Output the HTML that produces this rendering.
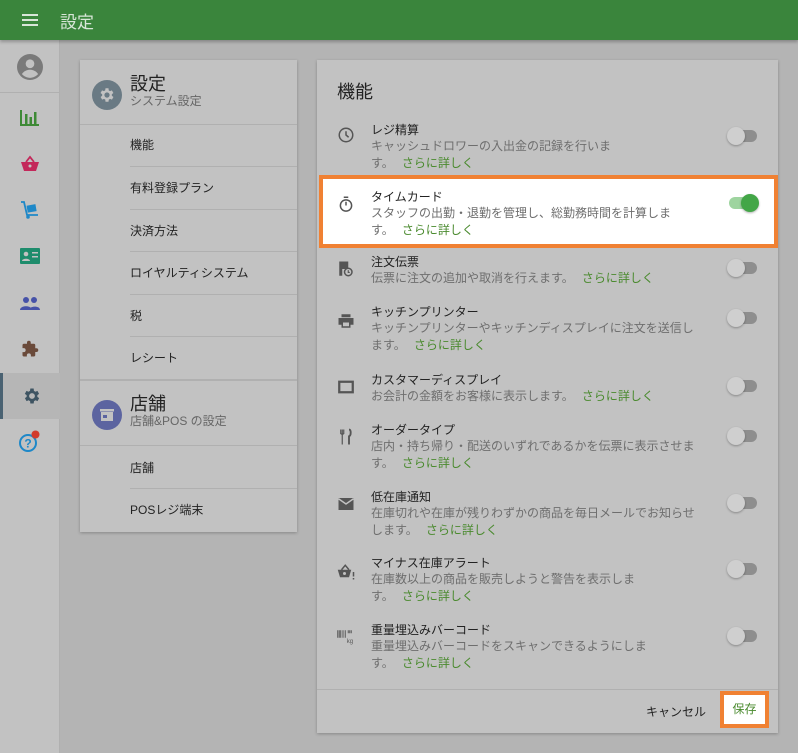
<!DOCTYPE html>
<html><head><meta charset="utf-8"><style>
*{box-sizing:border-box;margin:0;padding:0}
body{width:798px;height:753px;overflow:hidden;background:#b4b4b4;font-family:"Liberation Sans","Noto Sans CJK JP",sans-serif;position:relative;color:#1a1a1a}
.top{position:absolute;left:0;top:0;width:798px;height:40px;background:#3a853c;box-shadow:0 2px 3px rgba(0,0,0,.25);z-index:2}
.top .t{position:absolute;left:60px;top:8px;font-size:17px;color:#d8e6d8}
.ham{position:absolute;left:22px;top:14px;width:16px}
.ham i{display:block;height:2px;background:#d8e6d8;margin-bottom:3px}
.side{position:absolute;left:0;top:40px;width:60px;height:713px;background:#c2c2c2;border-right:1px solid #b0b0b0}
.si{position:absolute;left:0;width:60px;height:46px;display:flex;align-items:center;justify-content:center}
.card{position:absolute;background:#c2c2c2;box-shadow:0 1px 3px rgba(0,0,0,.25)}
.hd{position:absolute;left:12px;display:flex}
.circ{width:30px;height:30px;border-radius:50%;display:flex;align-items:center;justify-content:center}
.hd .h1{font-size:18px;line-height:20px;color:#222}
.hd .h2{font-size:12px;color:#666;line-height:14px}
.li{position:absolute;left:50px;right:0;height:43px;border-top:1px solid #b0b0b0;font-size:12px;color:#222;padding:10px 0 0 0}
.row{position:absolute;left:0;right:0}
.row .ic{position:absolute;left:20px;top:6px;width:18px;height:18px}
.row .tt{position:absolute;left:54px;top:0;font-size:12px;color:#222;line-height:16px}
.row .ds{position:absolute;left:54px;top:16px;white-space:nowrap;font-size:12px;color:#6e6e6e;line-height:16.5px}
.ds a{color:#4a8a2e;margin-left:8px}
.tg{position:absolute;left:412px;top:8px;width:28px;height:12px;border-radius:6px;background:#8e8e8e}
.tg:after{content:"";position:absolute;left:-2px;top:-3px;width:18px;height:18px;border-radius:50%;background:#cfcfcf;box-shadow:0 1px 2px rgba(0,0,0,.3)}
.tg.on{background:#9ed49f}.tg.on:after{left:12px;background:#43a647}
</style></head><body>
<div class="top"><div class="ham"><i></i><i></i><i></i></div><div class="t">設定</div></div>
<div class="side">
 <div class="si" style="top:4px"><svg width="26" height="26" viewBox="0 0 24 24"><circle cx="12" cy="12" r="12" fill="#7a7a7a"/><circle cx="12" cy="9" r="4" fill="#c2c2c2"/><path d="M4.5 18.5c2-3 5-4 7.5-4s5.5 1 7.5 4c-2 2.2-4.6 3.5-7.5 3.5s-5.5-1.3-7.5-3.5z" fill="#c2c2c2"/></svg></div>
 <div style="position:absolute;top:52px;left:0;width:60px;border-top:1px solid #b0b0b0"></div>
 <div class="si" style="top:54px"><svg width="20" height="18" viewBox="0 0 20 18"><path d="M1 2v15h18" stroke="#3e8a36" stroke-width="2" fill="none"/><rect x="5" y="6" width="2.5" height="10" fill="#3e8a36"/><rect x="9.5" y="9" width="2.5" height="7" fill="#3e8a36"/><rect x="14" y="4" width="2.5" height="12" fill="#3e8a36"/></svg></div>
 <div class="si" style="top:101px"><svg width="20" height="18" viewBox="0 0 20 18"><path d="M6 7l4-5 4 5" stroke="#c3285a" stroke-width="1.8" fill="none"/><path d="M1 7h18l-3 9H4z" fill="#c3285a"/><circle cx="10" cy="11" r="1.5" fill="#c2c2c2"/></svg></div>
 <div class="si" style="top:147px"><svg width="20" height="20" viewBox="0 0 20 20"><path d="M1 2h3l3 13h11" stroke="#1e88c8" stroke-width="1.8" fill="none"/><rect x="7" y="5" width="9" height="7" fill="#1e88c8" transform="rotate(-10 11 8)"/><circle cx="8" cy="17" r="1.8" fill="#1e88c8"/></svg></div>
 <div class="si" style="top:193px"><svg width="20" height="16" viewBox="0 0 20 16"><rect width="20" height="16" rx="1" fill="#1e8c6c"/><circle cx="6" cy="6" r="2.3" fill="#c2c2c2"/><path d="M2 13c0-3 8-3 8 0z" fill="#c2c2c2"/><rect x="12" y="4" width="6" height="1.5" fill="#c2c2c2"/><rect x="12" y="8" width="6" height="1.5" fill="#c2c2c2"/></svg></div>
 <div class="si" style="top:240px"><svg width="20" height="14" viewBox="0 0 20 14"><circle cx="6" cy="4" r="3" fill="#4652a8"/><circle cx="14" cy="4" r="3" fill="#4652a8"/><path d="M0 14c0-5 12-5 12 0zM9 14c0-4 11-5 11 0z" fill="#4652a8"/></svg></div>
 <div class="si" style="top:286px"><svg width="18" height="18" viewBox="0 0 24 24"><path d="M20.5 11H19V7a2 2 0 0 0-2-2h-4V3.5a2.5 2.5 0 0 0-5 0V5H4a2 2 0 0 0-2 2v3.8h1.5a2.7 2.7 0 0 1 0 5.4H2V20a2 2 0 0 0 2 2h3.8v-1.5a2.7 2.7 0 0 1 5.4 0V22H17a2 2 0 0 0 2-2v-4h1.5a2.5 2.5 0 0 0 0-5z" fill="#6a4a3a"/></svg></div>
 <div class="si" style="top:333px;background:#b6b6b6;border-left:3px solid #4a6272"><svg width="20" height="20" viewBox="0 0 24 24"><path d="M19.4 13a7.5 7.5 0 0 0 0-2l2.1-1.6-2-3.5-2.5 1a7 7 0 0 0-1.7-1L15 3h-4l-.4 2.9a7 7 0 0 0-1.7 1l-2.5-1-2 3.5L6.6 11a7.5 7.5 0 0 0 0 2l-2.1 1.6 2 3.5 2.5-1a7 7 0 0 0 1.7 1L11 21h4l.4-2.9a7 7 0 0 0 1.7-1l2.5 1 2-3.5zM13 15.5a3.5 3.5 0 1 1 0-7 3.5 3.5 0 0 1 0 7z" fill="#3e5462" transform="translate(-1 0)"/></svg></div>
 <div class="si" style="top:378px"><svg width="24" height="24" viewBox="0 0 24 24"><circle cx="10" cy="14" r="8" stroke="#1e88c8" stroke-width="2" fill="none"/><text x="10" y="18.5" font-size="12" font-weight="bold" fill="#1e88c8" text-anchor="middle" font-family="Liberation Sans">?</text><circle cx="17.5" cy="5.5" r="4" fill="#d23a2a"/></svg></div>
</div>

<div class="card" style="left:80px;top:60px;width:217px;height:472px">
 <div class="hd" style="top:14px"><div class="circ" style="background:#6a7a84;margin-top:6px"><svg width="18" height="18" viewBox="0 0 24 24"><path d="M19.4 13a7.5 7.5 0 0 0 0-2l2.1-1.6-2-3.5-2.5 1a7 7 0 0 0-1.7-1L15 3h-4l-.4 2.9a7 7 0 0 0-1.7 1l-2.5-1-2 3.5L6.6 11a7.5 7.5 0 0 0 0 2l-2.1 1.6 2 3.5 2.5-1a7 7 0 0 0 1.7 1L11 21h4l.4-2.9a7 7 0 0 0 1.7-1l2.5 1 2-3.5zM13 15.5a3.5 3.5 0 1 1 0-7 3.5 3.5 0 0 1 0 7z" fill="#c2c2c2" transform="translate(-1 0)"/></svg></div><div style="margin-left:8px"><div class="h1">設定</div><div class="h2">システム設定</div></div></div>
 <div style="position:absolute;top:64px;left:0;right:0;border-top:1px solid #b0b0b0"></div>
 <div class="li" style="top:64px;border-top:none;padding-top:12px">機能</div>
 <div class="li" style="top:106px;padding-top:12px">有料登録プラン</div>
 <div class="li" style="top:149px;padding-top:12px">決済方法</div>
 <div class="li" style="top:191px;padding-top:12px">ロイヤルティシステム</div>
 <div class="li" style="top:234px;padding-top:12px">税</div>
 <div class="li" style="top:276px;padding-top:12px">レシート</div>
 <div style="position:absolute;top:319px;left:0;right:0;border-top:2px solid #b0b0b0"></div>
 <div class="hd" style="top:334px"><div class="circ" style="background:#5c64a0;margin-top:6px"><svg width="14" height="12" viewBox="0 0 14 12"><rect x="0" y="0" width="14" height="2.5" fill="#c2c2c2"/><rect x="1" y="3" width="12" height="9" fill="#c2c2c2"/><rect x="3" y="6" width="4" height="3" fill="#5c64a0"/></svg></div><div style="margin-left:8px"><div class="h1">店舗</div><div class="h2">店舗&amp;POS の設定</div></div></div>
 <div style="position:absolute;top:385px;left:0;right:0;border-top:1px solid #b0b0b0"></div>
 <div class="li" style="top:385px;border-top:none;padding-top:14px">店舗</div>
 <div class="li" style="top:428px;padding-top:12px">POSレジ端末</div>
</div>

<div class="card" style="left:317px;top:60px;width:461px;height:673px">
 <div style="position:absolute;left:20px;top:18px;font-size:18px;color:#222">機能</div>
 <div class="row" style="top:62px"><svg class="ic" viewBox="0 0 24 24" style="top:4px"><circle cx="12" cy="12" r="9" stroke="#555" stroke-width="2" fill="none"/><path d="M12 7v5l3.5 3" stroke="#555" stroke-width="2" fill="none"/></svg><div class="tt">レジ精算</div><div class="ds">キャッシュドロワーの入出金の記録を行いま<br>す。<a>さらに詳しく</a></div><div class="tg"></div></div>
 <div style="position:absolute;left:2px;top:115px;width:459px;height:73px;background:#fff;border:4px solid #f08133"></div>
 <div class="row" style="top:129px"><svg class="ic" viewBox="0 0 24 24" style="top:6px"><circle cx="12" cy="14" r="7.5" stroke="#555" stroke-width="2" fill="none"/><path d="M9 3h6M12 9v5" stroke="#555" stroke-width="2"/></svg><div class="tt">タイムカード</div><div class="ds">スタッフの出勤・退勤を管理し、総勤務時間を計算しま<br>す。<a>さらに詳しく</a></div><div class="tg on"></div></div>
 <div class="row" style="top:194px"><svg class="ic" viewBox="0 0 24 24"><path d="M3 2h12v10H7v9H3z" fill="#555"/><circle cx="15" cy="16" r="5" stroke="#555" stroke-width="2" fill="none"/><path d="M15 13.5v3h2" stroke="#555" stroke-width="1.5" fill="none"/></svg><div class="tt">注文伝票</div><div class="ds">伝票に注文の追加や取消を行えます。<a>さらに詳しく</a></div><div class="tg"></div></div>
 <div class="row" style="top:244px"><svg class="ic" viewBox="0 0 24 24" style="top:8px"><path d="M6 3h12v4H6zM2 8h20v9h-4v4H6v-4H2z" fill="#555"/><rect x="8" y="14" width="8" height="5" fill="#c2c2c2"/></svg><div class="tt">キッチンプリンター</div><div class="ds">キッチンプリンターやキッチンディスプレイに注文を送信し<br>ます。<a>さらに詳しく</a></div><div class="tg"></div></div>
 <div class="row" style="top:312px"><svg class="ic" viewBox="0 0 24 24"><rect x="3" y="5" width="18" height="14" stroke="#555" stroke-width="3" fill="none"/></svg><div class="tt">カスタマーディスプレイ</div><div class="ds">お会計の金額をお客様に表示します。<a>さらに詳しく</a></div><div class="tg"></div></div>
 <div class="row" style="top:362px"><svg class="ic" viewBox="0 0 24 24"><path d="M5 2v6M7 2v6M9 2v6M5 8h4M7 8v14" stroke="#555" stroke-width="1.6" fill="none"/><path d="M16 2c3 0 3 8 0 9v11" stroke="#555" stroke-width="2.5" fill="none"/></svg><div class="tt">オーダータイプ</div><div class="ds">店内・持ち帰り・配送のいずれであるかを伝票に表示させま<br>す。<a>さらに詳しく</a></div><div class="tg"></div></div>
 <div class="row" style="top:429px"><svg class="ic" viewBox="0 0 24 24"><path d="M2 4h20v16H2z" fill="#555"/><path d="M2 5l10 7 10-7" stroke="#c2c2c2" stroke-width="2" fill="none"/></svg><div class="tt">低在庫通知</div><div class="ds">在庫切れや在庫が残りわずかの商品を毎日メールでお知らせ<br>します。<a>さらに詳しく</a></div><div class="tg"></div></div>
 <div class="row" style="top:495px"><svg class="ic" viewBox="0 0 24 24" style="top:8px"><path d="M6 9l5-6 5 6" stroke="#555" stroke-width="2" fill="none"/><path d="M1 9h18l-3 10H4z" fill="#555"/><circle cx="10" cy="14" r="2" fill="#c2c2c2"/><rect x="21" y="12" width="2" height="6" fill="#555"/><rect x="21" y="20" width="2" height="2" fill="#555"/></svg><div class="tt">マイナス在庫アラート</div><div class="ds">在庫数以上の商品を販売しようと警告を表示しま<br>す。<a>さらに詳しく</a></div><div class="tg"></div></div>
 <div class="row" style="top:562px"><svg class="ic" viewBox="0 0 24 24"><path d="M1 3v10M3 3v10M5 3v10M8 3v10M11 3v10M15 3v4M17 3v4M19 3v4" stroke="#555" stroke-width="1.3"/><text x="13" y="20" font-size="8" fill="#555" font-family="Liberation Sans">kg</text></svg><div class="tt">重量埋込みバーコード</div><div class="ds">重量埋込みバーコードをスキャンできるようにしま<br>す。<a>さらに詳しく</a></div><div class="tg"></div></div>
 <div style="position:absolute;left:0;right:0;top:629px;border-top:1px solid #b0b0b0"></div>
 <div style="position:absolute;left:329px;top:643px;font-size:12px;color:#222">キャンセル</div>
 <div style="position:absolute;left:403px;top:631px;width:49px;height:37px;background:#fff;border:4px solid #f08133;font-size:12px;color:#4a8a2e;text-align:center;line-height:29px">保存</div>
</div>
</body></html>
